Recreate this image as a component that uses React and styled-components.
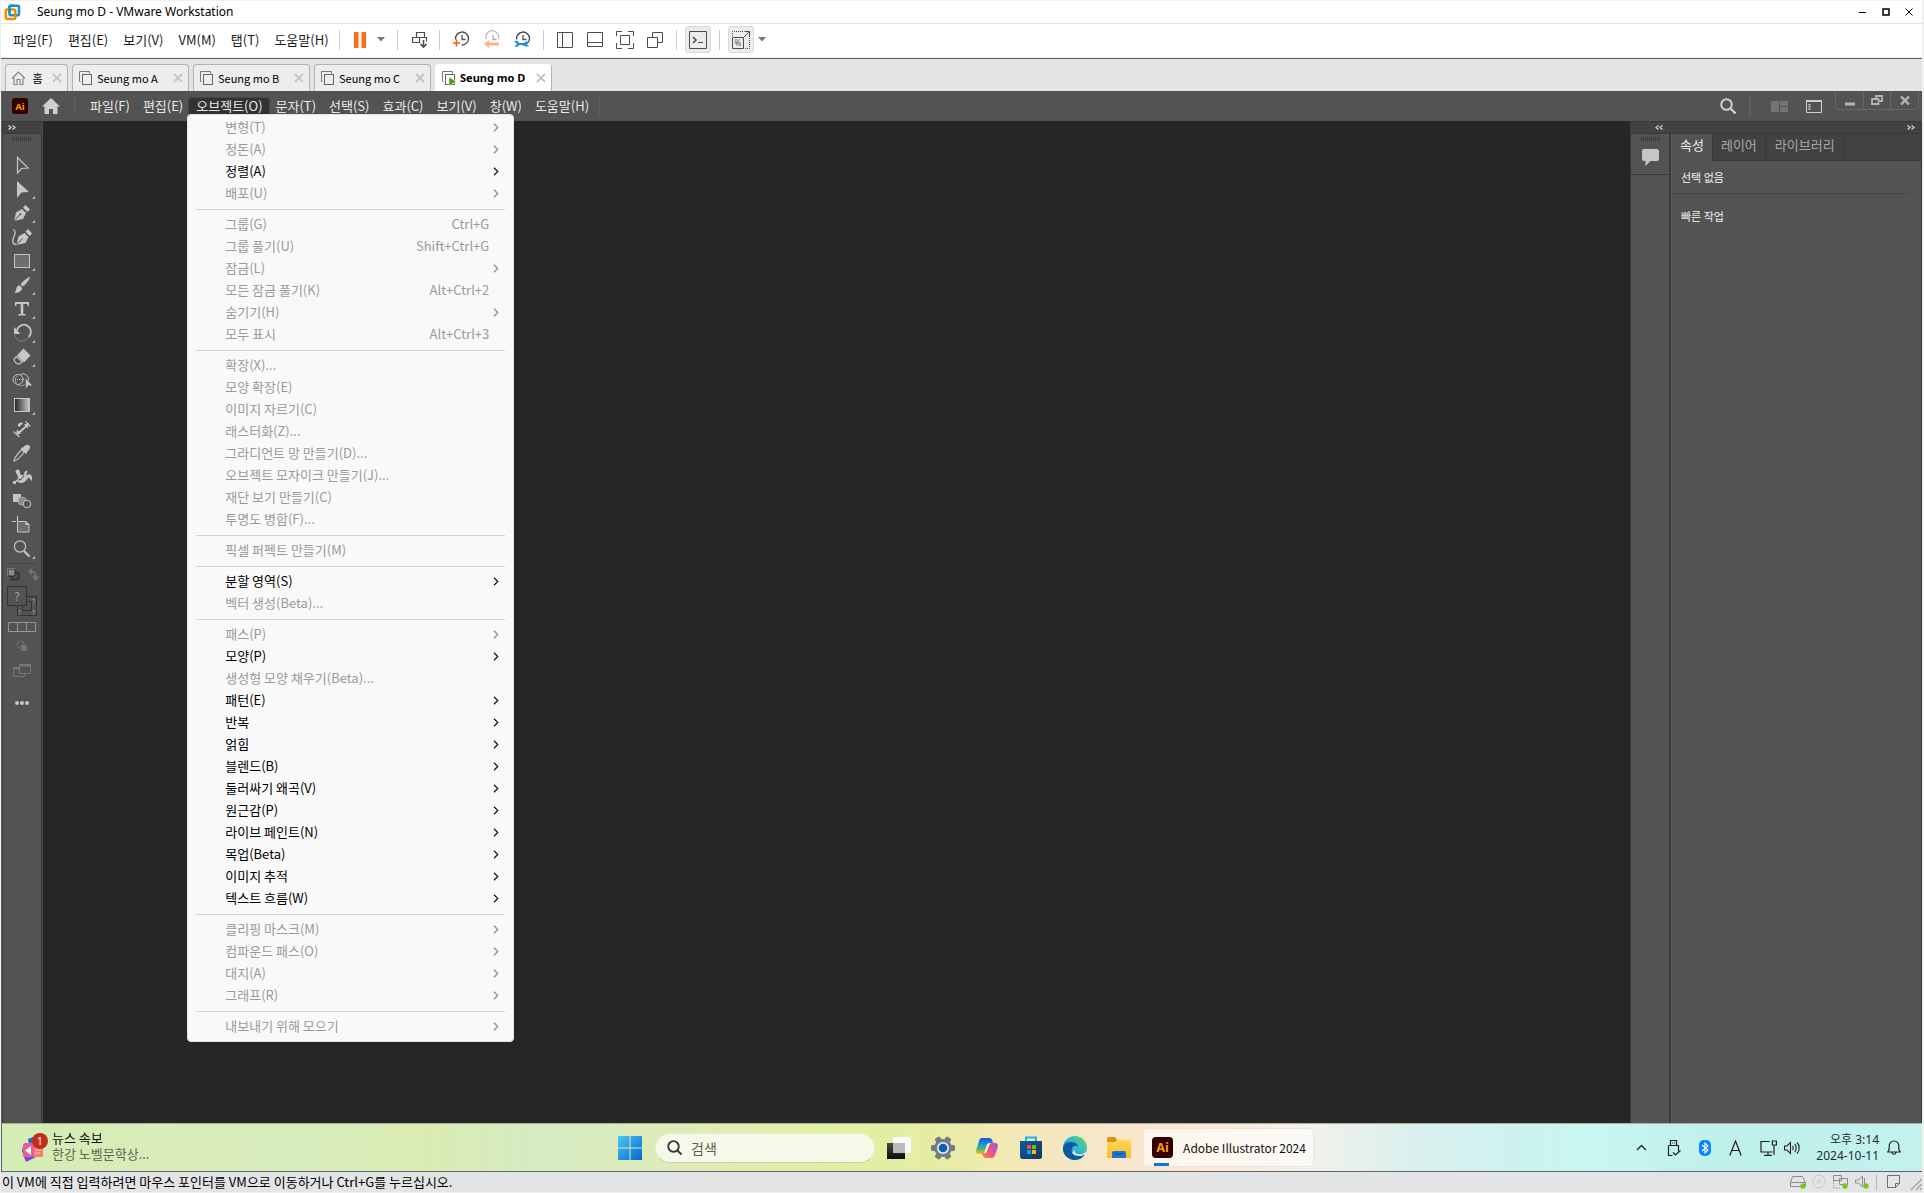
import React from 'react';
import styled, { createGlobalStyle } from 'styled-components';

const KR = '"Noto Sans CJK KR", "Noto Sans", sans-serif';
const UI = '"Noto Sans", "Noto Sans CJK KR", sans-serif';

const Global = createGlobalStyle`
  *, *::before, *::after { box-sizing: border-box; }
  html, body { margin: 0; }
  body { background: #f0f0f0; font: 13px/18px ${KR}; color: #111; }
  button, input { font: inherit; color: inherit; border: 0; padding: 0; margin: 0; background: none; }
  svg { display: block; flex: none; }
`;

const Window = styled.div`
  display: flex;
  flex-direction: column;
  height: 100vh;
  overflow: hidden;
  padding: 1px 2px 1px 1px;
`;

/* ---------- host window ---------- */

const TitleBar = styled.header`
  display: flex;
  align-items: center;
  height: 23px;
  flex: none;
  padding: 0 9px 0 3px;
  background: #fff;
  border-bottom: 1px solid #e2e2e2;
`;

const Title = styled.h1`
  flex: 1;
  margin: 0 0 0 16px;
  font: 400 12px/20px ${UI};
  color: #000;
`;

const CaptionButtons = styled.div`
  display: flex;
  gap: 15px;
`;

const IconButton = styled.button`
  display: flex;
  align-items: center;
  justify-content: center;
  width: ${(p) => (p.$w ? p.$w + 'px' : 'auto')};
  height: ${(p) => (p.$h ? p.$h + 'px' : 'auto')};
  margin-left: ${(p) => p.$ml || 0}px;
  flex: none;
`;

const Toolbar = styled.div`
  display: flex;
  align-items: center;
  height: 34px;
  flex: none;
  padding: 0 8px 2px 4px;
  background: #fff;
  border-bottom: 1px solid #e6e6e6;
`;

const HostMenu = styled.button`
  padding: 0 7px 0 8px;
  white-space: nowrap;
  color: #1a1a1a;
`;

const Rule = styled.span`
  width: ${(p) => p.$w || 1}px;
  height: 20px;
  margin-left: ${(p) => p.$ml}px;
  background: ${(p) => p.$c || '#c9c9c9'};
  flex: none;
`;

const PressedButton = styled(IconButton)`
  width: 26px;
  height: 27px;
  background: #ebecee;
  border: 1px solid #d8dada;
  border-radius: 3px;
`;

const TabRow = styled.nav`
  display: flex;
  align-items: flex-end;
  gap: 4px;
  height: 33px;
  flex: none;
  padding-left: 4px;
  background: #e3e4e6;
  border-top: 1px solid #606264;
`;

const Tab = styled.div`
  display: flex;
  align-items: center;
  height: 27px;
  padding: 0 5px;
  width: ${(p) => p.$w}px;
  background: ${(p) => (p.$active ? '#fff' : '#eceded')};
  border: 1px solid ${(p) => (p.$active ? '#fff' : '#b0b2b4')};
  border-right-color: #b0b2b4;
  border-bottom: 0;
  border-radius: 4px 4px 0 0;
`;

const TabLabel = styled.button`
  display: flex;
  flex: 1;
  align-items: center;
  gap: 4px;
  white-space: nowrap;
  font: ${(p) => (p.$active ? `700 11px/16px ${UI}` : `400 11px/16px ${KR}`)};
  color: #000;
`;

/* ---------- guest application ---------- */

const Guest = styled.main`
  display: flex;
  flex-direction: column;
  flex: 1;
  min-height: 0;
  border-left: 1px solid #606264;
`;

const AppBar = styled.div`
  display: flex;
  align-items: center;
  height: 30px;
  flex: none;
  padding: 0 3px 0 10px;
  background: #535353;
`;

const AppMenus = styled.div`
  display: flex;
  margin-left: 8px;
`;

const MenuAnchor = styled.div`
  position: relative;
`;

const AppMenu = styled.button`
  display: block;
  height: 16px;
  padding: 0 6px 0 7px;
  line-height: 16px;
  white-space: nowrap;
  color: #e8e8e8;
  background: ${(p) => (p.$open ? '#323232' : 'none')};
  outline: ${(p) => (p.$open ? '1px solid #454545' : 'none')};
  border-radius: 2px 2px 0 0;
`;

const Dropdown = styled.div`
  position: absolute;
  z-index: 5;
  top: 100%;
  left: -2px;
  width: 327px;
  padding: 2px 0 3px;
  background: #f9f9f9;
  border: 1px solid #e4e4e4;
  border-radius: 4px;
`;

const Group = styled.div`
  & + & {
    margin: 4px 8px 0;
    padding-top: 4px;
    border-top: 1px solid #d5d5d5;
  }
  &:first-child { margin: 0 8px; }
`;

const Item = styled.button`
  display: flex;
  align-items: center;
  width: 100%;
  height: 22px;
  padding: 0 6px 2px 29px;
  color: ${(p) => (p.disabled ? '#9a9a9a' : '#000')};
  white-space: nowrap;
`;

const ItemLabel = styled.span`
  flex: 1;
  text-align: left;
`;

const Shortcut = styled.kbd`
  font: inherit;
  margin-right: 10px;
`;

const AppTools = styled.div`
  display: flex;
  align-items: center;
  align-self: stretch;
  margin-left: auto;
`;

const WinBox = styled.div`
  display: flex;
  align-self: flex-start;
  height: 19px;
  margin-left: 13px;
  border: 1px solid #686868;
  border-top: 0;
  border-radius: 0 0 4px 4px;
  button + button { border-left: 1px solid #686868; }
`;

const Work = styled.div`
  display: flex;
  flex: 1;
  min-height: 0;
`;

const ToolPanel = styled.aside`
  display: flex;
  flex-direction: column;
  width: 41px;
  flex: none;
  background: #535353;
  border-left: 1px solid #3a3a3a;
  border-right: 1px solid #4a4a4a;
  box-shadow: inset -1px 0 #3a3a3a;
`;

const PanelHead = styled.div`
  display: flex;
  align-items: center;
  height: 13px;
  flex: none;
  padding: 0 6px 0 5px;
  background: #424242;
  border-top: 1px solid #383838;
  border-bottom: 1px solid #383838;
`;

const Grip = styled.div`
  width: 19px;
  height: 4px;
  margin: ${(p) => p.$m};
  background: repeating-linear-gradient(90deg, #3a3a3a 0 1px, transparent 1px 2px);
`;

const Tools = styled.div`
  display: flex;
  flex-direction: column;
  padding-bottom: 1px;
`;

const Canvas = styled.section`
  flex: 1;
  background: #262626;
`;

const Dock = styled.aside`
  display: flex;
  flex-direction: column;
  width: 292px;
  flex: none;
  background: #535353;
  border-left: 1px solid #3a3a3a;
  border-right: 1px solid #383838;
`;

const DockHead = styled(PanelHead)`
  padding: 0 6px 0 24px;
  svg + svg { margin-left: auto; }
`;

const DockBody = styled.div`
  display: flex;
  flex: 1;
`;

const CommentStrip = styled.div`
  width: 40px;
  border-right: 2px solid #3a3a3a;
`;

const CommentCell = styled.div`
  display: flex;
  flex-direction: column;
  align-items: center;
  height: 41px;
  border-bottom: 1px solid #3a3a3a;
`;

const Properties = styled.section`
  flex: 1;
  border-left: 1px solid #5a5a5a;
`;

const PanelTabs = styled.div`
  display: flex;
  height: 27px;
  background: #424242;
`;

const PanelTab = styled.button`
  padding: 0 ${(p) => p.$pad}px 5px;
  line-height: 20px;
  color: ${(p) => (p.$active ? '#f0f0f0' : '#a8a8a8')};
  background: ${(p) => (p.$active ? '#535353' : 'transparent')};
  border-right: 1px solid #383838;
  border-bottom: ${(p) => (p.$active ? '0' : '1px solid #383838')};
`;

const PanelTabsRest = styled.span`
  flex: 1;
  border-bottom: 1px solid #383838;
`;

const PanelText = styled.h2`
  margin: 0;
  padding: 7px 9px;
  font: 500 11px/18px ${KR};
  color: #dcdcdc;
`;

const PanelRule = styled.hr`
  height: 1px;
  margin: 0 12px 6px 0;
  border: 0;
  background: #474747;
`;

/* ---------- guest taskbar ---------- */

const Taskbar = styled.footer`
  display: grid;
  grid-template-columns: 1fr auto 1fr;
  align-items: center;
  height: 49px;
  flex: none;
  border-top: 1px solid #a9b29c;
  border-bottom: 1px solid #626468;
  background: linear-gradient(90deg, #d5ecb4 0%, #d9ecb9 8%, #d6ecbb 16%, #dbecb2 22%, #d5ebc2 28%, #e0ebb4 37%, #dfefa2 43%, #e6eda4 49%, #f3e9b4 52%, #f6e6c8 57%, #fce9d8 63%, #f2f1ea 68%, #dcf0ee 73%, #cdf2f0 79%, #c8f6f2 83%, #c0f0ec 90%, #c3f2ee 100%);
`;

const News = styled.button`
  display: flex;
  align-items: center;
  justify-self: start;
  gap: 4px;
  padding-left: 18px;
  text-align: left;
`;

const NewsText = styled.span`
  padding-bottom: 4px;
  line-height: 16px;
  span { display: block; }
  span + span { color: #5c6650; }
`;

const Center = styled.div`
  display: flex;
  align-items: center;
  padding-left: 8px;
`;

const Search = styled.label`
  display: flex;
  align-items: center;
  gap: 8px;
  width: 220px;
  height: 30px;
  margin: 0 12px 0 13px;
  padding: 0 11px;
  border-radius: 15px;
  background: #f6f9e9;
  border: 1px solid #e6edcc;
  border-bottom-color: #c6cfa6;
  input {
    flex: 1;
    min-width: 0;
    outline: 0;
    font-size: 14px;
  }
  input::placeholder { color: #5a5e50; opacity: 1; }
`;

const Pinned = styled.div`
  display: flex;
  gap: 20px;
`;

const Running = styled.button`
  display: flex;
  align-items: center;
  gap: 10px;
  height: 39px;
  margin-left: 12px;
  padding: 0 7px 0 8px;
  white-space: nowrap;
  font: 12px/18px ${KR};
  background: rgba(255, 255, 255, 0.6);
  background-image: linear-gradient(#0a78d4, #0a78d4);
  background-repeat: no-repeat;
  background-size: 15px 3px;
  background-position: 10px 100%;
  border: 1px solid rgba(225, 215, 205, 0.6);
  border-radius: 4px;
`;

const Tray = styled.div`
  display: flex;
  align-items: center;
  justify-self: end;
  padding-right: 21px;
`;

const TrayIcons = styled.div`
  display: flex;
  align-items: center;
  gap: 18px;
`;

const TrayPair = styled.div`
  display: flex;
  align-items: center;
  gap: 7px;
`;

const Clock = styled.time`
  width: 79px;
  margin-right: 8px;
  text-align: right;
  font: 12px/16px ${UI};
  color: #1c2c2c;
  span { display: block; }
`;

const StatusBar = styled.div`
  display: flex;
  align-items: center;
  height: 20px;
  flex: none;
  padding-left: 1px;
  background: #e3e4e6;
  color: #000;
`;

const StatusText = styled.p`
  flex: 1;
  margin: 0;
`;

/* ---------- drawings ---------- */

const Svg = ({ w, h, children, ...rest }) => (
  <svg width={w} height={h} viewBox={`0 0 ${w} ${h}`} fill="none" aria-hidden="true" {...rest}>{children}</svg>
);

const VmLogo = () => (
  <Svg w={17} h={17} strokeWidth="2.6">
    <rect x="5.5" y="1.8" width="9.5" height="9.5" rx="1.5" stroke="#0f95d0" />
    <rect x="1.8" y="5.5" width="9.5" height="9.5" rx="1.5" stroke="#f38b00" />
    <path d="M5.5 9V3.3a1.500 1.500 0 0 1 1.500-1.500h3" stroke="#0f95d0" />
  </Svg>
);

const Caret = () => <Svg w={8} h={5}><path d="M0 0h8L4 4.500z" fill="#777" /></Svg>;

const ClockIcon = ({ kind }) => (
  <Svg w={18} h={19} opacity={kind === 'back' ? 0.5 : 1}>
    <path d={kind === 'back' ? 'M3 9a6.5 6.5 0 1 1 12.5 0' : 'M3.6 9.5A6.5 6.5 0 1 1 9.8 15'} stroke={kind === 'back' ? '#777' : '#444'} strokeWidth="1.3" />
    <path d="M10 5v4.500h3.500" stroke="#555" strokeWidth="1.3" />
    {kind === 'add' && <path d="M4.500 9.500v7M1 13h7" stroke="#ff5a12" strokeWidth="1.6" />}
    {kind === 'back' && <path d="M1 14l5-4v2.600h10v3H6V18z" fill="#ff6a1a" />}
    {kind === 'manage' && <path d="M1 11.500c2-1.500 4.500-.7 5 1.500h5c1-2 3.500-2 5-.8l-2.600.6v2l2.600.7c-1.500 1.700-4 1.400-5-.5H6c-.8 2-3.300 2.500-5 1l2.500-.8v-2z" fill="#1a8fe0" />}
  </Svg>
);

const TabIcon = ({ on }) => (
  <Svg w={15} h={16}>
    <path d="M2.500 11.500h-1v-10h10v2" stroke="#777" />
    <rect x="4.500" y="4.500" width="9" height="10" stroke="#666" fill={on ? '#fff' : '#eceded'} />
    {on && <path d="M8 7l7 4.500-7 4.500z" fill="#4a9a12" stroke="#fff" strokeWidth=".5" />}
  </Svg>
);

const CloseX = () => <Svg w={10} h={10}><path d="M1 1l8 8M9 1l-8 8" stroke="#c3c5c7" strokeWidth="1.8" /></Svg>;

const HomeIcon = () => (
  <Svg w={15} h={15}><path d="M1 7.500L7.500 1 14 7.500M3 6.500v7h3v-5h3v5h3v-7" stroke="#888" strokeWidth="1.2" /></Svg>
);

const AiLogo = ({ s }) => (
  <Svg w={s} h={s} viewBox="0 0 20 20">
    <rect width="20" height="20" rx="3.500" fill="#300" />
    <text x="10" y="14.500" textAnchor="middle" fontFamily="Open Sans, sans-serif" fontWeight="700" fontSize="12" fill="#ff9a00">Ai</text>
  </Svg>
);

const Chev = ({ dim }) => <Svg w={6} h={9}><path d="M1 .8l3.700 3.700L1 8.200" stroke={dim ? '#8f8f8f' : '#1c1c1c'} strokeWidth="1.3" /></Svg>;

const Arrows = ({ left }) => (
  <Svg w={8} h={5} strokeWidth="1.300" stroke="#d0d0d0">
    <path d={left ? 'M3.500.5l-2.500 2 2.500 2M7.500.5l-2.500 2 2.500 2' : 'M.5.5l2.500 2-2.500 2M4.500.5l2.500 2-2.500 2'} />
  </Svg>
);

const C = '#c6c6c6';
const more = <path d="M32 19v3h-3z" fill={C} />;

const toolArt = [
  ['선택 도구', <path d="M14.500 4.500V20l4-4.500 6.500-.500z" stroke={C} strokeWidth="1.200" />],
  ['직접 선택 도구', <><path d="M14 4v17l4.500-5.500 7.500-.5z" fill={C} />{more}</>],
  ['펜 도구', <><path d="M11 20l2-8.500 6-3.500 4 4-3 6z" fill={C} /><path d="M20 6.500l2.500-2.500L27 8.500 24.500 11z" fill={C} /><path d="M11 20l6-6.500" stroke="#535353" /><circle cx="17.300" cy="13.200" r="1" fill="#535353" />{more}</>],
  ['곡률 도구', <><path d="M13.500 20l2-8.500 6-3.500 4 4-3 6z" fill={C} /><path d="M22.500 6.500L25 4l4 4.500L26.500 11z" fill={C} /><path d="M13.500 20l6-6.500" stroke="#535353" /><path d="M10 4.500c3 1 2.500 4 1 7s-2.500 8 2.500 8" stroke={C} strokeWidth="1.300" /></>],
  ['사각형 도구', <><rect x="11.500" y="5.500" width="15" height="13" fill="#6e6e6e" stroke={C} />{more}</>],
  ['브러쉬 도구', <><path d="M27 4c.5 1-5 8.500-7 9.500l-2.500-2.300C19 9 26 3.300 27 4z" fill={C} /><path d="M16.500 12.300l2.500 2.500c.3 3.200-3.500 5.700-8 5 2.500-1 1.500-3.200 2.800-5.500.7-1.200 1.600-1.900 2.700-2z" fill={C} />{more}</>],
  ['문자 도구', <><path d="M12 5h14v4h-1.500V7H20.300v10H22.500v1.600H15.500V17h2.200V7H13.500v2H12z" fill={C} />{more}</>],
  ['회전 도구', <><path d="M14 9.500a7 7 0 1 1 11.500 6.500" stroke={C} strokeWidth="1.700" /><path d="M11 6v7h6.500z" fill={C} /><path d="M12 14.500a7 7 0 0 0 13 2" stroke={C} strokeDasharray="1 1.500" />{more}</>],
  ['지우개 도구', <><path d="M20.500 3.500l7 7-6.500 7-7-7z" fill={C} /><path d="M13.500 11.500l-2.500 2.700c0 2.300 3 5 5 5l3.200-2.500z" stroke={C} strokeWidth="1.200" />{more}</>],
  ['도형 구성 도구', <><path d="M17.500 5.500a5.500 5.500 0 0 1 8 4c0 1.500-.3 2.500-1 3.500" stroke={C} /><circle cx="15" cy="10.500" r="5" stroke={C} /><path d="M14 7a5 5 0 0 0 8 8" stroke="#999" /><path d="M12 10.500h12" stroke={C} strokeDasharray="1 1" /><path d="M22.500 9v11l3-3.500 4.500.5z" fill={C} stroke="#535353" strokeWidth=".5" /></>],
  ['그레이디언트 도구', <><rect x="11.500" y="5.500" width="15" height="13" fill="url(#ramp)" stroke={C} />{more}</>],
  ['치수 도구', <><path d="M10.500 14.500l6 5.500M22.500 4.500l5 5" stroke={C} strokeWidth="1.200" /><path d="M15 16.500l9.500-8.500" stroke={C} strokeWidth="1.800" /><path d="M13 18l1-5.500 4 4zM26 6l-1.500 5.500-3.500-4z" fill={C} /><path d="M14.500 8.500c1-3 4-3.500 5.500-2.500l-3.500 4z" fill={C} /></>],
  ['스포이드 도구', <><path d="M11 20c-.5-3 6-9.500 8-11.500l2.500 2.500C19.500 13.500 14 19.500 11 20z" stroke={C} strokeWidth="1.200" /><path d="M17.500 7l2.500-.5C22 4 25 3 26.500 4.500S26.500 9 24 11l-.7 2.500z" fill={C} /></>],
  ['꼭두각시 비틀기 도구', <><path d="M12.500 7c-.5-2.500 3-3.500 4-1.500l1 4 2.500 1c1-.5 1-3.500 2.500-4.500s3 1 1.500 2l-1.500 2.500c2-.5 4-2 5.500-.5 1.200 1.500 1.500 4.500.5 6-1.500-1-1.500-3.500-3-3.500-1.500 2-3.500 5.500-7.500 5.500-2 0-3.500-1-4-2.500.5-2 1.500-3 .5-5z" fill={C} /><path d="M11.500 17.500l3-2.500" stroke={C} strokeWidth="1.300" /><circle cx="11.500" cy="17.500" r="1.800" fill={C} /><path d="M16 15c2.500-.5 3.500-2 5-4.500" stroke="#535353" /><circle cx="16.500" cy="14.500" r="1" fill="#535353" /></>],
  ['블렌드 도구', <><rect x="10" y="5" width="8" height="8" fill={C} /><circle cx="19" cy="12" r="4" fill="#8c8c8c" stroke="#a8a8a8" /><circle cx="24" cy="15" r="3.800" fill="#535353" stroke={C} /></>],
  ['대지 도구', <><path d="M14.500 3v5M9 8.500h4" stroke={C} strokeWidth="1.200" /><path d="M14.500 8.500h8.500l3 3v7.500H14.500z" fill="#6e6e6e" stroke={C} /><path d="M22.500 8v4h4z" fill={C} /></>],
  ['돋보기 도구', <><circle cx="17" cy="9.500" r="5.600" stroke={C} strokeWidth="1.200" /><path d="M21 14l5.500 5.500" stroke={C} strokeWidth="2.200" />{more}</>],
];

const Swatches = () => (
  <Svg w={38} h={148}>
    <path d="M4 1.500h30" stroke="#454545" />
    <rect x="8.500" y="10.500" width="7" height="7" stroke="#333" strokeWidth="2" />
    <rect x="5" y="7" width="7" height="7" fill="#8a8a8a" stroke="#2c2c2c" />
    <path d="M4.500 14.500v-8h8" stroke="#777" />
    <path d="M27 9.500c4-1 6 2 5.500 6" stroke="#747474" strokeWidth="1.800" />
    <path d="M29 6v7l-4-3.500zM29 14.500h7L32.500 19z" fill="#747474" />
    <g stroke="#343434">
      <rect x="14.500" y="34.500" width="19" height="19" />
      <rect x="19.500" y="39.500" width="9" height="9" />
      <rect x="4.500" y="24.500" width="19" height="19" fill="#535353" />
    </g>
    <g fontFamily="Noto Sans, sans-serif" fill="#9a9a9a">
      <text x="11.500" y="39" fontSize="12">?</text>
      <text x="29" y="42" fontSize="7">?</text>
      <text x="15" y="53" fontSize="7">?</text>
      <text x="29" y="53" fontSize="7">?</text>
    </g>
    <path d="M5.500 60.500h27v9h-27zM14.500 60v9M23.500 60v9" stroke="#959595" />
    <circle cx="17.500" cy="82.500" r="3.500" stroke="#707070" />
    <rect x="18" y="83" width="6" height="6" fill="#747474" />
    <g stroke="#777" fill="#535353">
      <path d="M10.500 105.500h11v9h-11z" /><path d="M10 106.500h8" strokeWidth="2" />
      <path d="M16.500 102.500h11v9h-11z" /><path d="M16 103.500h12" strokeWidth="2" />
    </g>
    <g fill={C}><circle cx="14" cy="141" r="2" /><circle cx="19" cy="141" r="2" /><circle cx="24" cy="141" r="2" /></g>
  </Svg>
);

const WindowsLogo = () => (
  <Svg w={24} h={24}><path d="M0 0h11.500v11.500H0zM12.500 0H24v11.500H12.500zM0 12.500h11.500V24H0zM12.500 12.500H24V24H12.500z" fill="url(#win)" /></Svg>
);

const gearTeeth = [0, 60, 120, 180, 240, 300];

const pinnedArt = [
  ['작업 보기', <><rect x="0" y="7" width="18" height="16" fill="url(#tvd)" /><rect x="6" y="1" width="18" height="16" fill="#fafafa" /><rect x="6" y="7" width="12" height="10" fill="#bbb" /></>],
  ['설정', <><g fill="#737c86">{gearTeeth.map((a) => <rect key={a} x="9" y="0" width="6" height="7" rx="1.500" transform={`rotate(${a + 30} 12 12)`} />)}</g><circle cx="12" cy="12" r="9" fill="#737c86" /><circle cx="12" cy="12" r="6" fill="#e4ecf4" /><circle cx="12" cy="12" r="4.300" fill="#0a5fb4" /></>],
  ['Copilot', <><path d="M7 2h7c2 0 3 1 3.500 3l.5 2h-3c-2 0-3 1-3.500 3l-2 6c-.6 1.500-1.500 2-3 2H4c-2.500 0-3.500-2-2.500-5l2.500-8c.5-2 1.500-3 3-3z" fill="url(#cpa)" /><path d="M17 22h-6c-2 0-3-1-3.500-3L7 17h2c2 0 3-1 3.500-3l2-5c.6-1.500 1.500-2 3-2H20c2.500 0 3.500 2 2.500 5l-2.500 7c-.5 2-1.500 3-3 3z" fill="url(#cpb)" /><path d="M12.500 8l1.500-1-3 10-2 .500z" fill="#f5eed0" /></>],
  ['Microsoft Store', <><path d="M7 6V1.500h10V6" stroke="#18b6ee" strokeWidth="2" /><path d="M1 5h22v15.500a2.500 2.500 0 0 1-2.500 2.500h-17A2.500 2.500 0 0 1 1 20.500z" fill="url(#store)" /><path d="M8 9h4v4H8z" fill="#f25022" /><path d="M13 9h4v4h-4z" fill="#7fba00" /><path d="M8 14h4v4H8z" fill="#00a4ef" /><path d="M13 14h4v4h-4z" fill="#ffb900" /></>],
  ['Microsoft Edge', <><circle cx="12" cy="12" r="12" fill="url(#edge)" /><path d="M0 12.500C.5 8 4 5.500 8.500 6c4 .4 6.500 2.500 7 6-.5-2-2-2.500-3.500-2.300-3 .4-4.500 4.300-2.800 7.300 2 3.500 8 4 12.300 1.500C19 23 14 24.500 9.500 23.700 4 22.700-.3 18 0 12.500z" fill="#0c59a4" /><path d="M13 10.500c-2.500 2-2.300 5.500.5 7s6.500.5 8-.5l1.500-1.500 2 3-3 4-.5-4c-4.300 2.500-10 2-12.300-1.500" fill="#f8e8cc" opacity=".95" /></>],
  ['파일 탐색기', <><path d="M0 3a2 2 0 0 1 2-2h6l2 2.500V7H0z" fill="#d9930d" /><path d="M0 6h8l2.500-2.500H24V22H0z" fill="url(#folder)" /><path d="M5 16.500A1.500 1.500 0 0 1 6.500 15h11a1.500 1.500 0 0 1 1.500 1.500V22H5z" fill="#127ad2" /><path d="M8 18h8" stroke="#0a5296" strokeWidth="1.200" /></>],
];

const DefsSvg = styled.svg`
  position: absolute;
`;

const Defs = () => (
  <DefsSvg width="0" height="0" aria-hidden="true">
    <defs>
      <linearGradient id="ramp"><stop stopColor="#222" /><stop offset="1" stopColor="#ccc" /></linearGradient>
      <linearGradient id="win" gradientUnits="userSpaceOnUse" x1="0" y1="0" x2="24" y2="24"><stop stopColor="#4cc8f8" /><stop offset="1" stopColor="#0068c8" /></linearGradient>
      <linearGradient id="tvd" x2="0" y2="1"><stop stopColor="#4a4a4a" /><stop offset="1" stopColor="#0c0c0c" /></linearGradient>
      <linearGradient id="cpa" x2="0" y2="1"><stop stopColor="#1a50d8" /><stop offset=".4" stopColor="#1696dc" /><stop offset=".7" stopColor="#52b86c" /><stop offset="1" stopColor="#f4c020" /></linearGradient>
      <linearGradient id="cpb" x1="1" x2="0" y2="1"><stop stopColor="#8c5ae8" /><stop offset=".5" stopColor="#f0508c" /><stop offset="1" stopColor="#ff8a3c" /></linearGradient>
      <linearGradient id="store" x2="1" y2="1"><stop stopColor="#0c5ca8" /><stop offset="1" stopColor="#1b3458" /></linearGradient>
      <linearGradient id="edge" x1="0" y1="1" x2="1" y2="0"><stop stopColor="#0a6cc4" /><stop offset=".5" stopColor="#28b4e0" /><stop offset="1" stopColor="#66dc54" /></linearGradient>
      <linearGradient id="folder" x2="0" y2="1"><stop stopColor="#ffd75c" /><stop offset="1" stopColor="#fcbc20" /></linearGradient>
    </defs>
  </DefsSvg>
);

/* ---------- data ---------- */

const hostMenus = ['파일(F)', '편집(E)', '보기(V)', 'VM(M)', '탭(T)', '도움말(H)'];
const appMenus = ['파일(F)', '편집(E)', '오브젝트(O)', '문자(T)', '선택(S)', '효과(C)', '보기(V)', '창(W)', '도움말(H)'];

// [label, enabled, submenu arrow, shortcut]
const objectMenu = [
  [['변형(T)', 0, 1], ['정돈(A)', 0, 1], ['정렬(A)', 1, 1], ['배포(U)', 0, 1]],
  [['그룹(G)', 0, 0, 'Ctrl+G'], ['그룹 풀기(U)', 0, 0, 'Shift+Ctrl+G'], ['잠금(L)', 0, 1], ['모든 잠금 풀기(K)', 0, 0, 'Alt+Ctrl+2'], ['숨기기(H)', 0, 1], ['모두 표시', 0, 0, 'Alt+Ctrl+3']],
  [['확장(X)...', 0], ['모양 확장(E)', 0], ['이미지 자르기(C)', 0], ['래스터화(Z)...', 0], ['그라디언트 망 만들기(D)...', 0], ['오브젝트 모자이크 만들기(J)...', 0], ['재단 보기 만들기(C)', 0], ['투명도 병합(F)...', 0]],
  [['픽셀 퍼펙트 만들기(M)', 0]],
  [['분할 영역(S)', 1, 1], ['벡터 생성(Beta)...', 0]],
  [['패스(P)', 0, 1], ['모양(P)', 1, 1], ['생성형 모양 채우기(Beta)...', 0], ['패턴(E)', 1, 1], ['반복', 1, 1], ['얽힘', 1, 1], ['블렌드(B)', 1, 1], ['둘러싸기 왜곡(V)', 1, 1], ['원근감(P)', 1, 1], ['라이브 페인트(N)', 1, 1], ['목업(Beta)', 1, 1], ['이미지 추적', 1, 1], ['텍스트 흐름(W)', 1, 1]],
  [['클리핑 마스크(M)', 0, 1], ['컴파운드 패스(O)', 0, 1], ['대지(A)', 0, 1], ['그래프(R)', 0, 1]],
  [['내보내기 위해 모으기', 0, 1]],
];

const ObjectMenu = () => (
  <Dropdown role="menu">
    {objectMenu.map((group, g) => (
      <Group key={g} role="group">
        {group.map(([label, on, sub, keys]) => (
          <Item key={label} role="menuitem" disabled={!on}>
            <ItemLabel>{label}</ItemLabel>
            {keys && <Shortcut>{keys}</Shortcut>}
            {sub ? <Chev dim={!on} /> : null}
          </Item>
        ))}
      </Group>
    ))}
  </Dropdown>
);

const S = '#4c4c4c';

export default function App() {
  return (
    <Window>
      <Global />
      <Defs />
      <TitleBar>
        <VmLogo />
        <Title>Seung mo D - VMware Workstation</Title>
        <CaptionButtons>
          <IconButton aria-label="최소화"><Svg w={8} h={8}><path d="M0 4.500h7" stroke="#000" /></Svg></IconButton>
          <IconButton aria-label="최대화"><Svg w={8} h={8}><path d="M1 1h6v6H1z" stroke="#000" strokeWidth="1.500" /></Svg></IconButton>
          <IconButton aria-label="닫기"><Svg w={8} h={8}><path d="M.5.5l7 7M7.500.5l-7 7" stroke="#000" /></Svg></IconButton>
        </CaptionButtons>
      </TitleBar>

      <Toolbar>
        {hostMenus.map((m) => <HostMenu key={m}>{m}</HostMenu>)}
        <Rule $ml={3} />
        <IconButton $ml={14} aria-label="일시 중지"><Svg w={12} h={16}><path d="M0 0h4.500v16H0zM7.500 0H12v16H7.500z" fill="#ff6a1a" /></Svg></IconButton>
        <IconButton $ml={11} aria-label="전원 메뉴"><Caret /></IconButton>
        <Rule $ml={12} />
        <IconButton $ml={13} aria-label="Ctrl+Alt+Del 보내기"><Svg w={18} h={18} stroke={S} strokeWidth="1.200"><path d="M5.500 1.500h8v5h-8zM9.500 11.500h-8v-5h14v4M8.500 6.500v5" /><path d="M12.500 9v7M9.500 13l3 3 3-3" strokeWidth="1.600" /></Svg></IconButton>
        <Rule $ml={10} />
        <IconButton $ml={12} aria-label="스냅샷 만들기"><ClockIcon kind="add" /></IconButton>
        <IconButton $ml={13} aria-label="스냅샷으로 되돌리기"><ClockIcon kind="back" /></IconButton>
        <IconButton $ml={12} aria-label="스냅샷 관리"><ClockIcon kind="manage" /></IconButton>
        <Rule $ml={12} />
        <IconButton $ml={12} aria-label="라이브러리 표시"><Svg w={18} h={18} stroke={S}><path d="M1.500 1.500h15v15h-15zM6.500 1.500v15" /></Svg></IconButton>
        <IconButton $ml={12} aria-label="미리 보기 표시"><Svg w={18} h={18} stroke={S}><path d="M1.500 1.500h15v14h-15zM1.500 11.500h15" /></Svg></IconButton>
        <IconButton $ml={12} aria-label="전체 화면"><Svg w={18} h={18} stroke={S}><path d="M.5 5V.5H6M12 .5h5.500V5M17.500 12v5.500H12M6 17.500H.5V12M4.500 4.500h9v9h-9z" /></Svg></IconButton>
        <IconButton $ml={12} aria-label="유니티 모드"><Svg w={18} h={18} stroke={S}><path d="M1.500 6.500h10v10h-10zM6.500 6.500v-5h10v10h-5" /></Svg></IconButton>
        <Rule $ml={12} />
        <PressedButton $ml={8} aria-label="콘솔 보기"><Svg w={18} h={18} stroke={S}><path d="M.5.5h17v17H.5z" /><path d="M4 6l3 3-3 3" strokeWidth="1.600" /><path d="M9 11.500h5" /></Svg></PressedButton>
        <Rule $ml={8} />
        <PressedButton $ml={8} aria-label="게스트 늘이기"><Svg w={18} h={18} stroke={S}><path d="M.5 5V.5h12M17.500 5v12.500H13" strokeDasharray="1 1" /><path d="M.5 6.500h11v11H.5zM11.500 6.500l6-6M13 .5h4.500V5" /><text x="2.500" y="15" fontSize="8" fill="#555" stroke="none" fontFamily="Noto Sans, sans-serif">%</text></Svg></PressedButton>
        <IconButton $ml={4} aria-label="늘이기 메뉴"><Caret /></IconButton>
      </Toolbar>

      <TabRow>
        <Tab $w={63}><TabLabel><HomeIcon />&nbsp;홈</TabLabel><IconButton aria-label="홈 닫기"><CloseX /></IconButton></Tab>
        {['Seung mo A', 'Seung mo B', 'Seung mo C', 'Seung mo D'].map((t, i) => (
          <Tab key={t} $w={117} $active={i === 3}>
            <TabLabel $active={i === 3}><TabIcon on={i === 3} />{t}</TabLabel>
            <IconButton aria-label={`${t} 닫기`}><CloseX /></IconButton>
          </Tab>
        ))}
      </TabRow>

      <Guest>
        <AppBar>
          <AiLogo s={16} />
          <IconButton $ml={14} aria-label="홈"><Svg w={18} h={16}><path d="M9 0L0 8.500h2.500V16H7v-5h4v5h4.500V8.500H18z" fill="#cfcfcf" /></Svg></IconButton>
          <Rule $ml={14} $c="#5f5f5f" />
          <AppMenus>
            {appMenus.map((m, i) => (
              <MenuAnchor key={m}>
                <AppMenu $open={i === 2} aria-expanded={i === 2}>{m}</AppMenu>
                {i === 2 && <ObjectMenu />}
              </MenuAnchor>
            ))}
          </AppMenus>
          <Rule $ml={4} $c="#5f5f5f" />
          <AppTools>
            <IconButton aria-label="검색"><Svg w={16} h={16} stroke="#cfcfcf"><circle cx="6.500" cy="6.500" r="5.300" strokeWidth="2" /><path d="M10.500 10.500l5 5" strokeWidth="2.300" /></Svg></IconButton>
            <Rule $ml={13} $w={2} $c="#606060" />
            <IconButton $ml={20} aria-label="문서 정렬"><Svg w={17} h={11}><path d="M0 0h8v11H0zM9 0h8v5H9zM9 6h8v5H9z" fill="#747474" /></Svg></IconButton>
            <IconButton $ml={18} aria-label="작업 영역"><Svg w={16} h={13} stroke="#cfcfcf"><path d="M.5 1h15v11.500H.5z" /><path d="M0 1h16" strokeWidth="2" /><path d="M3.500 4v6" strokeWidth="2" strokeDasharray="1.500 .8" /></Svg></IconButton>
            <WinBox>
              <IconButton $w={27} aria-label="최소화"><Svg w={10} h={12}><path d="M0 8.500h10v3H0z" fill="#b4b4b4" /></Svg></IconButton>
              <IconButton $w={27} aria-label="이전 크기로"><Svg w={12} h={10} stroke="#b4b4b4" strokeWidth="1.800"><path d="M5 3.500V1h6v5H8.500M1 4h6.500v5H1z" /></Svg></IconButton>
              <IconButton $w={28} aria-label="닫기"><Svg w={10} h={9} stroke="#b4b4b4" strokeWidth="2.400"><path d="M1 .5l8 8M9 .5l-8 8" /></Svg></IconButton>
            </WinBox>
          </AppTools>
        </AppBar>

        <Work>
          <ToolPanel>
            <PanelHead><Arrows /></PanelHead>
            <Grip $m="3px 0 12px 9px" />
            <Tools>
              {toolArt.map(([name, art]) => (
                <IconButton key={name} aria-label={name} $w={38} $h={24}><Svg w={38} h={24}>{art}</Svg></IconButton>
              ))}
            </Tools>
            <Swatches />
          </ToolPanel>
          <Canvas />
          <Dock>
            <DockHead><Arrows left /><Arrows /></DockHead>
            <DockBody>
              <CommentStrip>
                <CommentCell>
                  <Grip $m="3px 0 8px" />
                  <IconButton aria-label="댓글"><Svg w={17} h={17}><path d="M2 0h13a2 2 0 0 1 2 2v8a2 2 0 0 1-2 2H8.500L3.500 17v-5H2a2 2 0 0 1-2-2V2a2 2 0 0 1 2-2z" fill="#c6c6c6" /></Svg></IconButton>
                </CommentCell>
              </CommentStrip>
              <Properties>
                <PanelTabs>
                  <PanelTab $active $pad={8}>속성</PanelTab>
                  <PanelTab $pad={8}>레이어</PanelTab>
                  <PanelTab $pad={9}>라이브러리</PanelTab>
                  <PanelTabsRest />
                </PanelTabs>
                <PanelText>선택 없음</PanelText>
                <PanelRule />
                <PanelText>빠른 작업</PanelText>
              </Properties>
            </DockBody>
          </Dock>
        </Work>

        <Taskbar>
          <News>
            <Svg w={28} h={30}>
              <path d="M8 6l10-4 4 12-12 4z" fill="#1c6fd0" /><path d="M3 20l17 2-14 7z" fill="#7048e8" />
              <path d="M3 13l-1 5 3 9z" fill="#3a4ad0" />
              <rect x="3" y="10" width="20" height="14" rx="2" fill="#ee5a94" /><path d="M14 10h9v14h-9z" fill="#ff7a70" />
              <path d="M5 17.500l6-4.500v9z" fill="#fff" /><path d="M15 17h6M15 20h5" stroke="#ffd0c8" strokeWidth="1.200" />
              <circle cx="20" cy="8" r="8" fill="#c42b1c" />
              <text x="20" y="12" textAnchor="middle" fontSize="11" fill="#fff" fontFamily="Noto Sans, sans-serif">1</text>
            </Svg>
            <NewsText><span>뉴스 속보</span><span>한강 노벨문학상...</span></NewsText>
          </News>
          <Center>
            <IconButton aria-label="시작"><WindowsLogo /></IconButton>
            <Search>
              <Svg w={16} h={16} stroke="#333" strokeWidth="1.800"><circle cx="6.500" cy="6.500" r="5.300" /><path d="M10.500 10.500l4 4" /></Svg>
              <input type="search" placeholder="검색" aria-label="검색" />
            </Search>
            <Pinned>
              {pinnedArt.map(([name, art]) => (
                <IconButton key={name} aria-label={name}><Svg w={24} h={24}>{art}</Svg></IconButton>
              ))}
            </Pinned>
            <Running><AiLogo s={21} />Adobe Illustrator 2024</Running>
          </Center>
          <Tray>
            <TrayIcons>
              <Svg w={13} h={7}><path d="M1 6l4.500-4.500L10 6" stroke="#222" strokeWidth="1.400" /></Svg>
              <Svg w={14} h={18} stroke="#222"><path d="M3.500 6V1.500h6V6M1.500 6.500h10v6M1.500 6.500v10h4M5 4h1M7 4h1" strokeWidth="1.200" /><path d="M6 13.500l2.500 2.500 5-4.500" strokeWidth="1.200" /></Svg>
              <Svg w={12} h={16}><rect width="12" height="16" rx="5" fill="#0a84ff" /><path d="M3 5l6 5-3 3V3l3 3-6 5" stroke="#fff" strokeWidth="1.100" /></Svg>
              <Svg w={13} h={16}><path d="M.8 15.500L6.500 1l5.700 14.500M2.800 10.500h7.500" stroke="#222" strokeWidth="1.200" /></Svg>
              <TrayPair>
                <Svg w={17} h={16} stroke="#222" strokeWidth="1.200"><path d="M9.500 1.500H1v10.500h11.500M4 15.400h8M8 12v3M14 1h2.400v4h-4V1zM14 5v10" /></Svg>
                <Svg w={16} h={14} stroke="#222" strokeWidth="1.100"><path d="M.5 5h2.500l3.500-3.500v11L3 9H.5zM8.500 5c1 1 1 3 0 4M10.700 3c2 2 2 6 0 8M13 1.500c3 3 3 8 0 11" /></Svg>
              </TrayPair>
            </TrayIcons>
            <Clock><span>오후 3:14</span><span>2024-10-11</span></Clock>
            <Svg w={14} h={16} stroke="#222" strokeWidth="1.200"><path d="M7 1a4.800 4.800 0 0 0-4.800 4.800V9L.8 12h12.400l-1.400-3V5.800A4.800 4.800 0 0 0 7 1zM5 12.500c.3 2.300 3.700 2.300 4 0" /></Svg>
          </Tray>
        </Taskbar>
      </Guest>

      <StatusBar>
        <StatusText>이 VM에 직접 입력하려면 마우스 포인터를 VM으로 이동하거나 Ctrl+G를 누르십시오.</StatusText>
        <Svg w={132} h={18} stroke="#8a8c8e">
          <path d="M2.500 3.500h10l3 6v4H.5v-4zM.5 9.500h15" />
          <circle cx="29" cy="8.500" r="6.300" stroke="#c4c6c8" /><circle cx="29" cy="8.500" r="1.500" stroke="#c4c6c8" />
          <path d="M43.500 2.500h8v5h-8zM49.500 5.500h8v6h-8z" fill="#e3e4e6" /><path d="M43.500 8v7h7" strokeDasharray="1 1" />
          <path d="M65.500 7h3l4-4v11l-4-4h-3zM74.500 5v6" />
          <path d="M86.500 1v16" stroke="#b4b6b8" />
          <path d="M97.500 2.500h12v8l-4 4h-8zM109.500 10.500h-4v4" stroke="#6c6e70" />
          <path d="M121 17l11-11M126 17l6-6M130 17l2-2" stroke="#a0a2a4" strokeWidth="1.300" />
          <g fill="#7ac61c" stroke="none"><circle cx="13" cy="13" r="2.700" /><circle cx="55" cy="13" r="2.700" /><circle cx="76" cy="13" r="2.700" /></g>
        </Svg>
      </StatusBar>
    </Window>
  );
}
